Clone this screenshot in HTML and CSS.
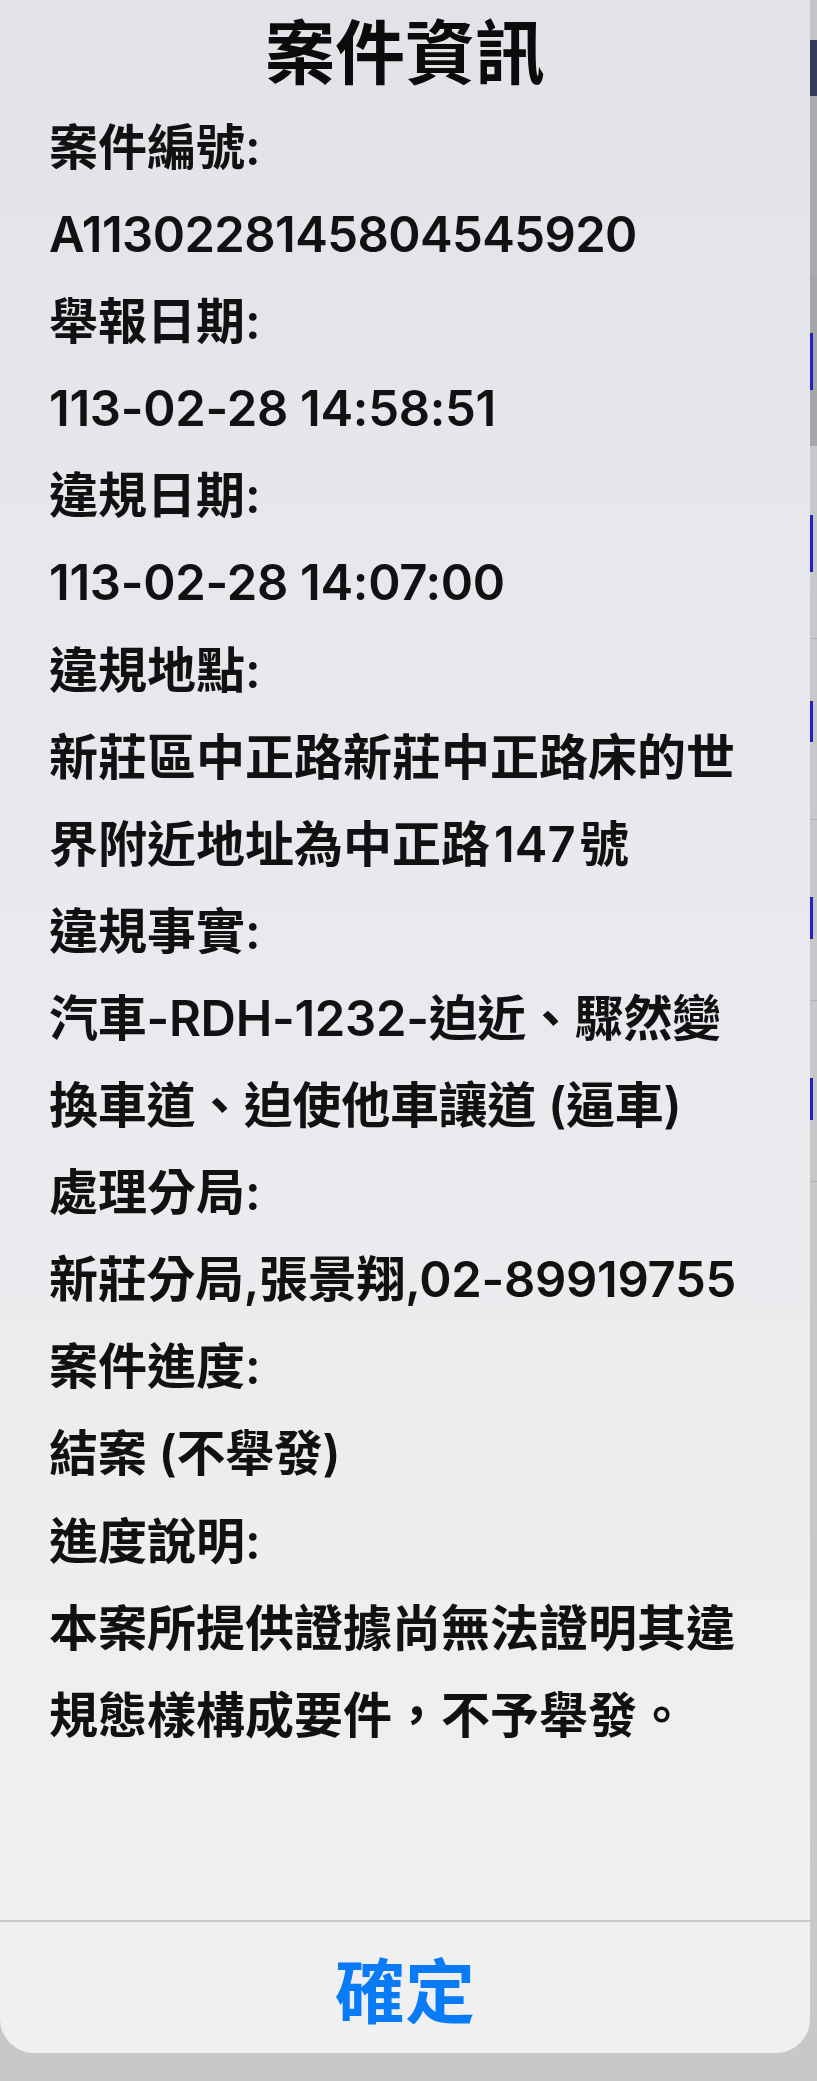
FILE: index.html
```html
<!DOCTYPE html>
<html lang="zh-Hant">
  <head>
    <meta charset="UTF-8" />
    <meta name="viewport" content="width=device-width, initial-scale=1.0" />
    <title>案件資訊</title>
    <link rel="stylesheet" href="styles.css">
  </head>
  <body>
    <div class="screen">
      <div class="alert">
        <h2 class="alert-title">案件資訊</h2>
        <div class="alert-message">
          <p>案件編號:</p>
          <p class="latin latin-id">A1130228145804545920</p>
          <p>舉報日期:</p>
          <p class="latin">113-02-28 14:58:51</p>
          <p>違規日期:</p>
          <p class="latin">113-02-28 14:07:00</p>
          <p>違規地點:</p>
          <p>新莊區中正路新莊中正路床的世<br>界附近地址為中正路&#8202;147&#8202;號</p>
          <p>違規事實:</p>
          <p class="latin">汽車-RDH-1232-迫近、驟然變<br>換車道、迫使他車讓道 (逼車)</p>
          <p>處理分局:</p>
          <p class="latin">新莊分局,張景翔,02-89919755</p>
          <p>案件進度:</p>
          <p class="latin">結案 (不舉發)</p>
          <p>進度說明:</p>
          <p>本案所提供證據尚無法證明其違<br>規態樣構成要件，不予舉發。</p>
        </div>
        <button type="button" class="alert-button">確定</button>
      </div>

      <!-- the list page behind the alert, only a sliver shows -->
      <div class="behind">
        <div class="behind-row row-top"></div>
        <div class="behind-row row-nav"></div>
        <div class="behind-row row-head"></div>
        <div class="behind-row row-tab"><span class="mark mark-a"></span></div>
        <div class="behind-row row-tab2"><span class="mark mark-b"></span></div>
        <div class="behind-row row-item"><span class="mark mark-c"></span></div>
        <div class="behind-row row-item"><span class="mark mark-d"></span></div>
        <div class="behind-row row-item"><span class="mark mark-d"></span></div>
        <div class="behind-row row-rest"></div>
      </div>
    </div>
  </body>
</html>
```

FILE: styles.css
```css
:root {
  --text-color: #111111;
  --link-color: #0a7bf6;
  --dim-bg: #c8c8c8;
  --mark-color: #1c22c4;
}

* {
  box-sizing: border-box;
  margin: 0;
  padding: 0;
}

body {
  font-family: Inter, "Noto Sans CJK TC", sans-serif;
  background-color: var(--dim-bg);
  color: var(--text-color);
  width: 817px;
  height: 2081px;
  overflow: hidden;
}

.screen {
  display: flex;
  align-items: flex-start;
}

.alert {
  width: 810px;
  height: 2053px;
  display: flex;
  flex-direction: column;
  border-radius: 0 0 34px 34px;
  background: linear-gradient(
    180deg,
    #e2e3e8 0%,
    #e7e7ed 30%,
    #e9e9ef 50%,
    #eeeeef 75%,
    #f0f0f0 100%
  );
  overflow: hidden;
}

.alert-title {
  padding-top: 4px;
  font-size: 70px;
  line-height: 100px;
  font-weight: 700;
  text-align: center;
  color: #0b0b0b;
}

.alert-message {
  flex: 1;
  padding: 0 49px;
  font-size: 49px;
  line-height: 87.1px;
  font-weight: 600;
  white-space: nowrap;
}

.alert-message .latin {
  letter-spacing: -0.3px;
}

.alert-message .latin-id {
  letter-spacing: -0.6px;
}

.alert-button {
  height: 133px;
  border: none;
  border-top: 2px solid #c9c9cb;
  background: transparent;
  font-family: inherit;
  font-size: 70px;
  font-weight: 700;
  color: var(--link-color);
  cursor: pointer;
}

.behind {
  flex: 1;
  display: flex;
  flex-direction: column;
}

.behind-row {
  display: flex;
  flex-direction: column;
  background-color: var(--dim-bg);
}

.row-top {
  height: 40px;
  background-color: #c4c4c6;
}

.row-nav {
  height: 56px;
  background-color: #353c5a;
}

.row-head {
  height: 179px;
  background-color: #aaaaab;
}

.row-tab {
  height: 171px;
  background-color: #a6a6a7;
}

.row-tab2 {
  height: 192px;
}

.row-item {
  height: 181px;
  border-top: 1px solid #b0b0b2;
}

.row-rest {
  height: 900px;
  border-top: 1px solid #b0b0b2;
}

.mark {
  display: block;
  width: 3px;
  background-color: var(--mark-color);
}

.mark-a {
  margin-top: 58px;
  height: 57px;
}

.mark-b {
  margin-top: 69px;
  height: 57px;
}

.mark-c {
  margin-top: 62px;
  height: 41px;
}

.mark-d {
  margin-top: 77px;
  height: 42px;
}
```
